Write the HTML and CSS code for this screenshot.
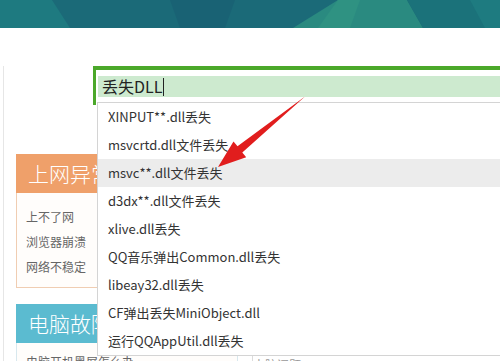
FILE: index.html
```html
<!DOCTYPE html>
<html lang="zh-CN">
<head>
  <meta charset="UTF-8">
  <meta name="viewport" content="width=device-width, initial-scale=1.0">
  <title>电脑问题搜索</title>
  <link rel="stylesheet" href="styles.css">
</head>
<body>
  <!-- 顶部横幅 -->
  <div class="banner">
    <svg class="banner-art" width="500" height="28" viewBox="0 0 500 28">
      <rect width="500" height="28" fill="#1b6a78"/>
      <polygon points="0,0 52,0 70,28 0,28" fill="#1e7a80"/>
      <polygon points="170,0 235,0 225,28 180,28" fill="#196274"/>
      <polygon points="338,0 407,0 423,28 293,28" fill="#2a8a80"/>
      <polygon points="338,0 360,0 350,28 318,28" fill="#2f9282"/>
      <polygon points="407,0 500,0 500,28 423,28" fill="#1b727a"/>
      <polygon points="470,0 500,0 500,28 485,28" fill="#1e7b80"/>
    </svg>
  </div>

  <div class="page">
    <!-- 搜索框 -->
    <div class="search">
      <div class="search-field">丢失DLL<span class="caret"></span></div>

      <ul class="suggest">
        <li>XINPUT**.dll丢失</li>
        <li>msvcrtd.dll文件丢失</li>
        <li class="active">msvc**.dll文件丢失</li>
        <li>d3dx**.dll文件丢失</li>
        <li>xlive.dll丢失</li>
        <li>QQ音乐弹出Common.dll丢失</li>
        <li>libeay32.dll丢失</li>
        <li>CF弹出丢失MiniObject.dll</li>
        <li>运行QQAppUtil.dll丢失</li>
      </ul>
    </div>

    <div class="content">
      <!-- 左侧分类 -->
      <div class="sidebar">
        <div class="panel panel-orange">
          <div class="panel-title">上网异常</div>
          <ul class="panel-body">
            <li>上不了网</li>
            <li>浏览器崩溃</li>
            <li>网络不稳定</li>
          </ul>
        </div>

        <div class="panel panel-blue">
          <div class="panel-title">电脑故障</div>
          <ul class="panel-body">
            <li>电脑开机黑屏怎么办</li>
          </ul>
        </div>
      </div>

      <div class="list">
        <div class="list-row"><span>电脑问题</span><span></span></div>
      </div>
    </div>
  </div>

  <!-- 红色箭头标注 -->
  <svg class="arrow" width="500" height="361" viewBox="0 0 500 361">
    <polygon points="218,167 233.5,141.6 237.5,146.3 305,96.5 242.3,152.5 246.2,157.2" fill="#e11d1d"/>
  </svg>
</body>
</html>
```

FILE: styles.css
```css
/* 基础设置 */
body {
  margin: 0;
  font-family: "Noto Sans CJK SC", "Noto Sans", sans-serif;
  color: #333;
  background-color: #fff;
  overflow: hidden;
}

ul {
  list-style: none;
  margin: 0;
  padding: 0;
}

/* 顶部横幅 */
.banner {
  height: 28px;
}

.banner-art {
  display: block;
}

.page {
  margin-left: 3px;
  border-left: 1px solid #e6e6e6;
  padding-left: 12px;
  height: 333px;
}

/* 搜索框 */
.search {
  position: relative;
  margin: 38px 0 0 77px;
  border-top: 4px solid #4ba82a;
  border-left: 3px solid #4ba82a;
  padding: 6px 0 8px 2px;
}

.search-field {
  height: 21px;
  line-height: 21px;
  background-color: #cdeacf;
  padding-left: 4px;
  font-size: 16px;
  color: #222;
  display: flex;
  align-items: center;
}

.caret {
  display: inline-block;
  width: 1px;
  height: 18px;
  background-color: #222;
  margin-left: 1px;
}

.suggest {
  position: absolute;
  top: 32px;
  left: 1px;
  width: 420px;
  background-color: #fff;
  border: 1px solid #d4d4d4;
  border-right: none;
  z-index: 2;
}

.suggest li {
  height: 28px;
  line-height: 28px;
  padding-left: 10px;
  font-size: 13px;
  color: #333;
}

.suggest li.active {
  background-color: #ececec;
}

/* 左侧分类 */
.content {
  display: flex;
  margin-top: 49px;
}

.sidebar {
  width: 222px;
  display: flex;
  flex-direction: column;
  gap: 16px;
}

.panel-title {
  height: 39px;
  line-height: 38px;
  padding-left: 12px;
  font-size: 21px;
  font-weight: 300;
  color: #fff;
}

.panel-body {
  padding: 11px 0 8px 9px;
  background-color: #fffdfb;
}

.panel-body li {
  height: 25px;
  line-height: 25px;
  font-size: 12px;
  color: #666;
}

.panel-orange .panel-title {
  background-color: #efa06a;
}

.panel-orange .panel-body {
  border: 1px solid #f0cdb2;
  border-top: none;
}

.panel-blue .panel-title {
  background-color: #5bbbd0;
}

.panel-blue .panel-body {
  border: 1px solid #d8e8ee;
  border-top: none;
  padding-top: 6px;
}

/* 右侧列表 */
.list {
  flex: 1;
  padding-top: 201px;
}

.list-row {
  display: flex;
  border-top: 1px solid #dcdcdc;
  border-left: 1px solid #dcdcdc;
  margin-left: 14px;
  height: 20px;
  font-size: 12px;
  color: #999;
}

/* 箭头标注 */
.arrow {
  position: absolute;
  top: 0;
  left: 0;
  z-index: 3;
}
```
